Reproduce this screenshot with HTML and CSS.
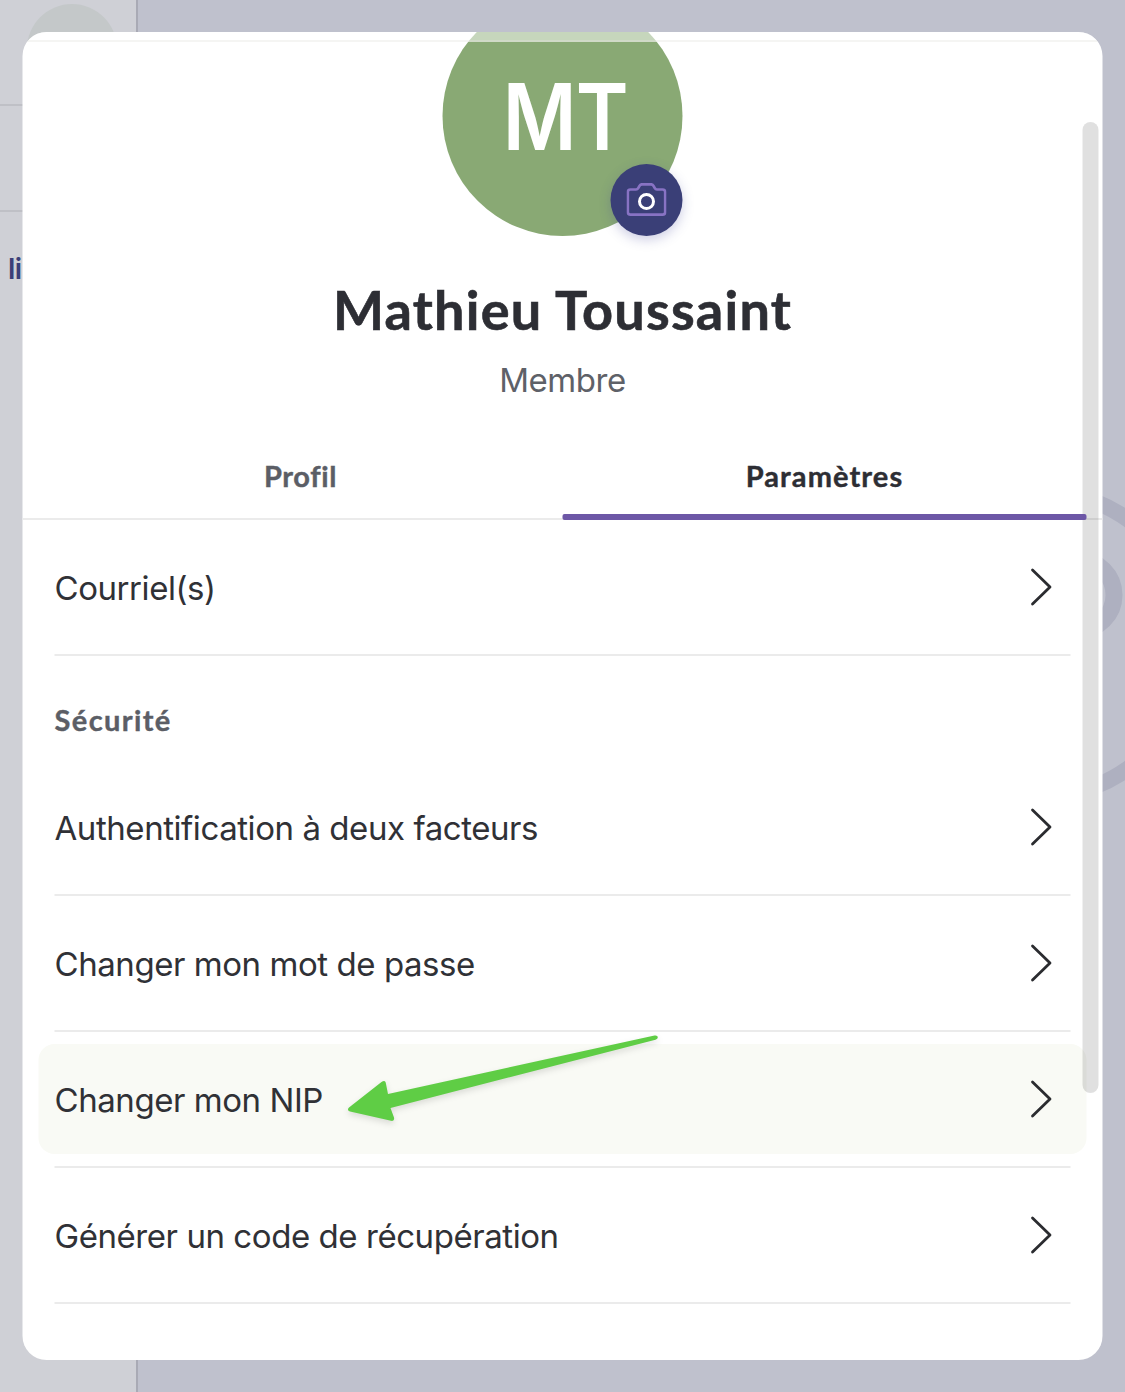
FILE: index.html
```html
<!DOCTYPE html>
<html lang="fr">
<head>
<meta charset="utf-8">
<title>Paramètres</title>
<link rel="stylesheet" href="styles.css">
</head>
<body>
<div class="page">
  <aside class="sidebar">
    <div class="sidebar-user"><span class="sidebar-avatar"></span></div>
    <div class="sidebar-block"></div>
    <div class="sidebar-link">li</div>
  </aside>
  <svg class="rings" width="220" height="340" viewBox="0 0 220 340" fill="none" stroke="#aeb0c0">
    <circle cx="134" cy="171" r="153" stroke-width="16"/>
    <circle cx="173.500" cy="122" r="35.500" stroke-width="17"/>
  </svg>
</div>

<main class="modal">
  <div class="modal-bar"></div>
  <header class="profile">
    <div class="avatar">
      <span class="initials">MT</span>
      <button class="camera" aria-label="Photo">
        <svg width="40" height="34" viewBox="0 0 40 34" fill="none" stroke-linejoin="round">
          <path d="M4 6.500H9.500Q11 6.500 11.700 5.200L13 2.800Q13.800 1.300 15.500 1.300H24.500Q26.200 1.300 27 2.800L28.300 5.200Q29 6.500 30.500 6.500H36Q38.700 6.500 38.700 9.200V29Q38.700 31.700 36 31.700H4Q1.300 31.700 1.300 29V9.200Q1.300 6.500 4 6.500Z" stroke="#8873c4" stroke-width="2.700"/>
          <circle cx="20" cy="18.500" r="7" stroke="#fff" stroke-width="3"/>
        </svg>
      </button>
    </div>
    <h1 class="name">Mathieu Toussaint</h1>
    <p class="role">Membre</p>
  </header>

  <nav class="tabs">
    <a class="tab"><span>Profil</span></a>
    <a class="tab active"><span>Paramètres</span></a>
  </nav>

  <section class="list">
    <div class="row"><div class="item"><span>Courriel(s)</span><svg class="chevron" viewBox="0 0 22 38"><path d="M2 2L19.500 19L2 36"/></svg></div></div>
    <h2 class="section-title">Sécurité</h2>
    <div class="row"><div class="item"><span>Authentification à deux facteurs</span><svg class="chevron" viewBox="0 0 22 38"><path d="M2 2L19.500 19L2 36"/></svg></div></div>
    <div class="row"><div class="item"><span>Changer mon mot de passe</span><svg class="chevron" viewBox="0 0 22 38"><path d="M2 2L19.500 19L2 36"/></svg></div></div>
    <div class="row"><div class="item highlighted"><span>Changer mon NIP</span><svg class="chevron" viewBox="0 0 22 38"><path d="M2 2L19.500 19L2 36"/></svg></div></div>
    <div class="row"><div class="item"><span>Générer un code de récupération</span><svg class="chevron" viewBox="0 0 22 38"><path d="M2 2L19.500 19L2 36"/></svg></div></div>
  </section>
  <div class="scrollbar"></div>
</main>

<svg class="arrow" width="330" height="110" viewBox="340 1025 330 110">
  <path d="M349 1107.500L381.500 1082Q385.500 1079 386 1084L388 1094L654.500 1035.500Q657.500 1035 657.800 1037Q658 1038.800 655.500 1039.700L390.500 1108L394 1117.500Q394.800 1121.500 391 1120.800L350 1111.500Q346.500 1110 349 1107.500Z"/>
</svg>
</body>
</html>
```
FILE: styles.css
```css
* { box-sizing: border-box; }
body {
  margin: 0;
  position: relative;
  width: 1125px;
  height: 1392px;
  overflow: hidden;
  background: #bfc1cd;
  font-family: Inter, "Liberation Sans", sans-serif;
  color: #303136;
}
h1, h2, p { margin: 0; }

.page { position: absolute; inset: 0; }
.sidebar {
  width: 138px;
  height: 100%;
  background: #cfd0d6;
  border-right: 2px solid #a9aab5;
}
.sidebar-user {
  height: 106px;
  padding: 4px 0 0 27px;
  border-bottom: 2px solid #bfc0c6;
}
.sidebar-avatar {
  display: block;
  width: 90px;
  height: 90px;
  border-radius: 50%;
  background: #c4c8c9;
}
.sidebar-block { height: 106px; border-bottom: 2px solid #bfc0c6; }
.sidebar-link {
  padding: 39px 0 0 8px;
  font-size: 28px;
  line-height: 36px;
  font-weight: 600;
  letter-spacing: -.5px;
  color: #3b3f78;
}
.rings { position: absolute; left: 905px; top: 473px; }

.modal {
  position: absolute;
  left: 23px;
  top: 32px;
  width: 1080px;
  height: 1328px;
  transform: translateX(-.5px);
  border-radius: 24px;
  overflow: hidden;
  background: #fff;
}
.modal-bar {
  position: absolute;
  z-index: 2;
  top: 0;
  left: 0;
  right: 0;
  height: 10px;
  background: rgba(255, 255, 255, .52);
  border-bottom: 2px solid rgba(225, 226, 222, .35);
}

.profile {
  display: flex;
  flex-direction: column;
  align-items: center;
  height: 402px;
}
.avatar {
  position: relative;
  display: flex;
  flex: none;
  justify-content: center;
  width: 240px;
  height: 240px;
  margin-top: -36px;
  border-radius: 50%;
  background: #89a974;
}
.initials {
  margin: 61px 0 0 6px;
  font-size: 92px;
  line-height: 120px;
  font-weight: 600;
  letter-spacing: -1px;
  color: #fff;
  transform: scaleX(.87);
}
.camera {
  position: absolute;
  right: 0;
  bottom: 0;
  display: flex;
  align-items: center;
  justify-content: center;
  width: 72px;
  height: 72px;
  padding: 0;
  border: 0;
  border-radius: 50%;
  background: #3a3f77;
  box-shadow: 0 4px 12px rgba(58, 63, 150, .25);
}
.name {
  margin-top: 41px;
  font-family: Lato, sans-serif;
  font-size: 54px;
  line-height: 66px;
  font-weight: 700;
  letter-spacing: 1.2px;
  -webkit-text-stroke: .6px currentColor;
  white-space: nowrap;
  color: #2d2e34;
}
.role {
  margin-top: 15px;
  font-size: 33px;
  line-height: 44px;
  letter-spacing: -.45px;
  color: #5e6168;
}

.tabs {
  display: flex;
  height: 86px;
  padding: 0 16px;
  border-bottom: 2px solid #ebebeb;
}
.tab {
  position: relative;
  flex: none;
  width: 524px;
  height: 86px;
  font-family: Lato, sans-serif;
  font-size: 29px;
  line-height: 84px;
  font-weight: 700;
  letter-spacing: .6px;
  -webkit-text-stroke: .4px currentColor;
  text-align: center;
  color: #5b5e66;
}
.tab.active { z-index: 3; letter-spacing: 1.1px; color: #2d2e34; }
.tab.active::after {
  content: "";
  position: absolute;
  left: 0;
  right: 0;
  bottom: 0;
  height: 6px;
  border-radius: 2px;
  background: #6d57a6;
}

.list { padding: 0 32px; }
.row {
  height: 136px;
  padding-top: 12px;
  border-bottom: 2px solid #ebebeb;
}
.item {
  display: flex;
  align-items: center;
  justify-content: space-between;
  height: 110px;
  margin: 0 -16px;
  padding: 0 34px 0 16px;
  border-radius: 16px;
  font-size: 33px;
  line-height: 44px;
  letter-spacing: -.44px;
  white-space: nowrap;
}
.item span { padding-top: 2px; }
.highlighted { background: #f9faf5; }
.chevron {
  width: 22px;
  height: 38px;
  fill: none;
  stroke: #2b2c30;
  stroke-width: 2.8;
  stroke-linecap: round;
  stroke-linejoin: round;
}
.section-title {
  height: 104px;
  font-family: Lato, sans-serif;
  font-size: 29px;
  line-height: 128px;
  font-weight: 700;
  letter-spacing: 1.4px;
  -webkit-text-stroke: .4px currentColor;
  color: #5b5e66;
}
.scrollbar {
  position: absolute;
  z-index: 1;
  right: 4px;
  top: 90px;
  width: 16px;
  height: 971px;
  border-radius: 8px;
  background: rgba(0, 0, 0, .12);
}
.arrow {
  position: absolute;
  left: 340px;
  top: 1025px;
  fill: #5fcd45;
  filter: drop-shadow(0 3px 3px rgba(0, 0, 0, .12));
}
```
